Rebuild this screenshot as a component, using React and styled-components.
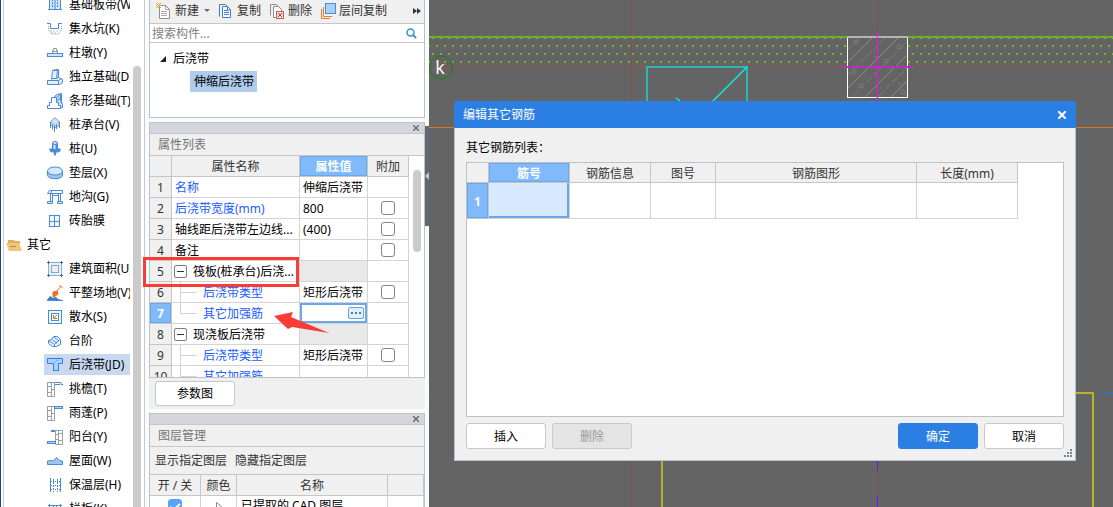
import { useState } from 'react';

import styled, { createGlobalStyle, css } from 'styled-components';


const GlobalStyle = createGlobalStyle`
    * {
        box-sizing: border-box;
    }

    body {
        margin: 0;
        font-family: "Noto Sans", "Noto Sans CJK SC", sans-serif;
        font-size: 12px;
        line-height: 20px;
        color: #000;
        overflow: hidden;
    }

    button, input {
        font: inherit;
        color: inherit;
    }

    svg {
        display: block;
        flex: none;
    }
`


const COMPONENTS = [
    { name: '基础板带(W)', icon: 'strip' },
    { name: '集水坑(K)', icon: 'pit' },
    { name: '柱墩(Y)', icon: 'pier' },
    { name: '独立基础(D)', icon: 'isolated' },
    { name: '条形基础(T)', icon: 'stripBase' },
    { name: '桩承台(V)', icon: 'cap' },
    { name: '桩(U)', icon: 'pile' },
    { name: '垫层(X)', icon: 'cushion' },
    { name: '地沟(G)', icon: 'trench' },
    { name: '砖胎膜', icon: 'brick' },
    { name: '其它', group: true },
    { name: '建筑面积(U)', icon: 'area' },
    { name: '平整场地(V)', icon: 'site' },
    { name: '散水(S)', icon: 'apron' },
    { name: '台阶', icon: 'steps' },
    { name: '后浇带(JD)', icon: 'postCast' },
    { name: '挑檐(T)', icon: 'eaves' },
    { name: '雨蓬(P)', icon: 'canopy' },
    { name: '阳台(Y)', icon: 'balcony' },
    { name: '屋面(W)', icon: 'roof' },
    { name: '保温层(H)', icon: 'insulation' },
    { name: '栏板(K)', icon: 'railing' },
];

const PROPERTIES = [
    { name: '名称', value: '伸缩后浇带', link: true },
    { name: '后浇带宽度(mm)', value: '800', link: true, extra: true },
    { name: '轴线距后浇带左边线...', value: '(400)', extra: true },
    { name: '备注', value: '', extra: true },
    { name: '筏板(桩承台)后浇...', group: true },
    { name: '后浇带类型', value: '矩形后浇带', link: true, child: true, extra: true },
    { name: '其它加强筋', value: '', link: true, child: true, last: true, active: true },
    { name: '现浇板后浇带', group: true },
    { name: '后浇带类型', value: '矩形后浇带', link: true, child: true, extra: true },
    { name: '其它加强筋', value: '', link: true, child: true, last: true },
];


function App () {
    return ( <Page>
        <GlobalStyle />
        <Sidebar />
        <MiddleColumn>
            <ComponentTree />
            <PropertyPanel />
            <LayerPanel />
        </MiddleColumn>
        <Splitter>
            <SplitterHandle aria-label="收起">
                <svg width="4" height="8"><path d="M4 0v8L0 4z" fill="#c3c8cf" /></svg>
            </SplitterHandle>
        </Splitter>
        <Workspace>
            <Drawing />
            <RebarDialog />
        </Workspace>
        <Annotation />
    </Page>
    )
}


const Page = styled.div`
    position: relative;
    display: flex;
    height: 100vh;
    overflow: hidden;
    background-color: #fafbfd;
`

const MiddleColumn = styled.div`
    flex: 0 0 276px;
    display: flex;
    flex-direction: column;
    gap: 4px;
    margin-left: 4px;
`

const Splitter = styled.div`
    flex: 0 0 4px;
    padding-top: 126px;
`

const SplitterHandle = styled.button`
    display: flex;
    align-items: center;
    width: 4px;
    height: 100px;
    padding: 0;
    border: 0;
    background-color: #5f6875;
`

const Workspace = styled.main`
    position: relative;
    flex: 1;
    min-width: 0;
    background-color: #646464;
`


export default App;


/******************************
 * COMPONENT LIST
 */

function Sidebar () {
    const [selected, setSelected] = useState('后浇带(JD)');

    return ( <SidebarWrapper>
        <SidebarList>
            {COMPONENTS.map(c => <li key={c.name}>
                <SidebarItem $group={c.group} $selected={c.name === selected} onClick={() => setSelected(c.name)}>
                    <ItemIcon name={c.group ? 'folder' : c.icon} />
                    <span>{c.name}</span>
                </SidebarItem>
            </li>)}
        </SidebarList>
        <SidebarScroll><SidebarThumb /></SidebarScroll>
    </SidebarWrapper>
    )
}


const SidebarWrapper = styled.nav`
    flex: 0 0 145px;
    display: flex;
    border-left: 1px solid #23447f;
    border-right: 1px solid #c6c8d2;
    background-color: #fff;
    overflow: hidden;
`

/* scrolled by a third of a row */
const SidebarList = styled.ul`
    flex: 1;
    min-width: 0;
    margin: -8px 0 0 2px;
    padding: 0;
    border-left: 1px solid #c9cedd;
    list-style: none;

    li {
        height: 24px;
        padding: 2px 0 1px;
    }
`

const SidebarItem = styled.button`
    display: flex;
    align-items: center;
    gap: ${p => p.$group ? 5 : 6}px;
    width: ${p => p.$group ? 124 : 86}px;
    height: 21px;
    margin-left: ${p => p.$group ? 0 : 40}px;
    padding: 0 0 0 ${p => p.$group ? 2 : 3}px;
    border: 0;
    background-color: ${p => p.$selected ? '#c7d8f0' : 'transparent'};
    white-space: nowrap;
    overflow: hidden;
`

const SidebarScroll = styled.div`
    flex: 0 0 11px;
    padding-top: 66px;
`

const SidebarThumb = styled.div`
    width: 8px;
    height: 100%;
    border-radius: 4px 4px 0 0;
    background-color: #cbcbcb;
`

const ICONS = {
    folder: <>
        <path d="M2 3h6l1 1h5v3H5L2 13z" fill="#e0b15c" />
        <path d="M0 6h13l3 8H3z" fill="#edc67c" />
        <path d="M4 9.500h6" stroke="#b98533" />
    </>,
    strip: <>
        <rect x="2.500" y="0.500" width="11" height="12" fill="#cfe4f9" />
        <path d="M5.500 2v9M10.500 2v9" strokeDasharray="2 1" />
        <path d="M1 12.500h14M8 1v11" />
    </>,
    pit: <>
        <path d="M0 2.500h3.500v5h8v-5H15" />
        <path d="M1.500 5v4l3 4h7l3-4V5" stroke="#8e99a5" strokeDasharray="1 1" />
        <path d="M3.500 10h9M5 12h6" stroke="#8e99a5" strokeDasharray="1 2" />
    </>,
    pier: <>
        <path d="M5.500 8.500v-3h1v-2h3v2h1v3M6 6.500h4" stroke="#8e99a5" />
        <rect x="0.500" y="8.500" width="15" height="3" fill="#d3e6fa" />
    </>,
    isolated: <>
        <path d="M4.500 10.500l1-9 3-1h3v8l4 2v3l-3 2h-12v-4h4" fill="#e3effc" />
        <path d="M4.500 9.500h5l1-8h-4M9.500 9.500l2-1M.500 11.500h11v4M11.500 11.500l3-2" />
    </>,
    stripBase: <>
        <path d="M5.500 6.500l4-5 5-1v10l1 1v3l-4 1z" fill="#c3ddf8" />
        <path d="M.500 15.500v-3h2v-3h2v-5h5v5h2v3h2v3z" fill="#fff" />
        <path d="M9.500 4.500l4-3v6l2 3M9.500 8l4-3" />
    </>,
    cap: <>
        <path d="M8 .500l4.500 4.500-4.500 4-4.500-4z" fill="#cfe0f1" stroke="#7c97b3" />
        <path d="M3.500 5v6M5.500 7.500v5M7.500 9v6M9.500 8v4M12.500 5v6M4 8l4 3 4-3" />
    </>,
    pile: <>
        <path d="M5.500 2v6h-3l1.500 3 2.500-.500 1.500 4 1.500-4 2.500 .500 1.500-3h-3V2z" fill="#4a8bd6" />
        <path d="M7.500 3v5" stroke="#d6e8fb" strokeWidth="2" />
        <ellipse cx="8" cy="2" rx="2.500" ry="1.500" fill="#cfe4f9" />
    </>,
    cushion: <>
        <path d="M.500 6v4c0 5 15 5 15 0V6" fill="#9dc3ee" />
        <ellipse cx="8" cy="6" rx="7.500" ry="4" fill="#d6e8fb" />
    </>,
    trench: <>
        <path d="M.500 4.500l2-3h13v3zM3.500 4.500v8M5.500 4.500v8M11.500 4.500v8M13.500 4.500v8" />
        <path d="M.500 12.500h5v2h-5zM10.500 12.500h5v2h-5z" fill="#d3e6fa" />
        <path d="M6 6.500h5M5 1l-1 3" />
    </>,
    brick: <>
        <rect x="2.500" y="2.500" width="10" height="11" fill="#f4f9ff" />
        <path d="M7.500 2v12M2 8.500h11" />
        <path d="M5.500 7v3M10.500 7v3" stroke="#a7cdf3" />
    </>,
    area: <>
        <rect x="1.500" y="1.500" width="13" height="13" fill="#e6f1fd" stroke="#7db1ea" />
        <rect x="4.500" y="4.500" width="7" height="7" fill="#eee" stroke="#9aa3ad" />
        <path d="M0 1.500h3M13 1.500h3M0 14.500h3M13 14.500h3M1.500 0v3M14.500 0v3M1.500 13v3M14.500 13v3" stroke="#44699a" />
    </>,
    site: <>
        <path d="M10 6l4-5M12.500 .500l3 2" stroke="#e8702a" />
        <path d="M6 7l4-1 1 3-4 3H6z" fill="#e8702a" stroke="#e8702a" />
        <path d="M0 15l3-4 3 2 3-1 2 2 4 1z" fill="#3c7cc6" stroke="none" />
        <path d="M0 15.500h16" />
    </>,
    apron: <>
        <rect x="1.500" y="1.500" width="13" height="13" fill="#f1f7fe" />
        <rect x="4.500" y="4.500" width="7" height="7" fill="#fff" />
        <path d="M10 6l-3 3M6.500 6v3.500H10" stroke="#e8702a" />
    </>,
    steps: <>
        <path d="M1.500 7.500l3-1 2-3h4l3 3v5l-4 2h-4l-4-3z" fill="#e7f2fe" />
        <path d="M1.500 7.500l6 4v2M5 6.500l5 4M7 4l5 4M7.500 11l5-4" />
    </>,
    postCast: <>
        <path d="M.500 1.500h15v5h-4v7h-5v-7h-6z" fill="#a9d0fa" stroke="#2f83dc" />
        <path d="M6.500 6.500l3-3h2" stroke="#74b1f2" />
    </>,
    eaves: <>
        <path d="M.500 1.500h7v14h-7zM4.500 1.500v14M.500 5.500h4M4.500 8.500h3M.500 11.500h4" stroke="#9b9ea3" />
        <path d="M8 1.500h6v2h2M8 3.500h5" />
    </>,
    canopy: <>
        <path d="M.500 1.500h7v14h-7zM4.500 1.500v14M.500 5.500h4M4.500 8.500h3M.500 11.500h4" stroke="#9b9ea3" />
        <rect x="7.500" y="1.500" width="8" height="2" fill="#a9d0fa" />
    </>,
    balcony: <>
        <path d="M8.500 1.500h7v14h-7zM11.500 1.500v14M8.500 5.500h3M11.500 4.500h4M8.500 10.500h3M11.500 11.500h4" stroke="#9b9ea3" />
        <path d="M4 2h4" strokeWidth="2" />
        <rect x="0.500" y="12.500" width="8" height="2" fill="#a9d0fa" />
    </>,
    roof: <path d="M.500 11.500V8l4-.500 2 .500 3-3.500 3 3 3 .500v3.500z" fill="#9dc3ee" />,
    insulation: <>
        <path d="M3.500 1v14M13.500 1v14" />
        <path d="M6.500 2v13M10.500 2v13" strokeDasharray="2 1" />
        <path d="M4 4.500h9M4 8.500h9M4 12.500h9" strokeDasharray="1 1" />
    </>,
    railing: <path d="M1 4.500h14M2.500 3v12M6.500 5v3l3 3M13.500 3v12M9.500 5v6M2 8.500h12" />,
};

function ItemIcon ({ name }) {
    const plain = name === 'folder';

    return ( <svg width="16" height="16" fill="none" stroke={plain ? 'none' : '#4a8bd6'}>
        {ICONS[name]}
    </svg>
    )
}


/******************************
 * TREE OF COMPONENTS
 */

function ComponentTree () {
    return ( <TreePanel>
        <Toolbar>
            <ToolButton>
                <svg width="16" height="16" fill="none">
                    <path d="M3.500 2.500h6l4 4v9h-10z" fill="#fff" stroke="#8d8f93" />
                    <path d="M9.500 2.500v4h4M5 8.500h6M5 10.500h6M5 12.500h6" stroke="#a5a7aa" />
                    <path d="M0 .500h5M0 2.500h5M0 4.500h5" stroke="#f0a43a" strokeDasharray="1 1" />
                    <path d="M1 1.500h4M1 3.500h4" stroke="#f0a43a" strokeDasharray="1 1" />
                </svg>
                新建
                <svg width="8" height="4"><path d="M2 0h6L5 3z" fill="#6c6c6c" /></svg>
            </ToolButton>
            <ToolButton>
                <svg width="16" height="16" fill="none" stroke="#3f7fd0">
                    <path d="M1.500 13.500v-12h6l2 2" />
                    <path d="M4.500 3.500h5l3 3v8h-8z" fill="#fff" />
                    <path d="M6 7.500h4M6 9.500h5M6 11.500h5M9.500 4v3h3" />
                </svg>
                复制
            </ToolButton>
            <ToolButton>
                <svg width="16" height="16" fill="none" stroke="#8d8f93">
                    <path d="M1.500 12.500v-11h6l2 2" />
                    <path d="M4.500 3.500h5l3 3v8h-8z" fill="#fff" />
                    <rect x="7.500" y="8.500" width="7" height="7" fill="#fbe0e0" stroke="#d65656" />
                    <path d="M9 10l4 4M13 10l-4 4" stroke="#d03434" />
                </svg>
                删除
            </ToolButton>
            <ToolButton>
                <svg width="16" height="16" fill="none" stroke="#e8772d">
                    <path d="M1.500 6v9.500H10M3.500 4v9.500H12" />
                    <rect x="5.500" y="0.500" width="10" height="10" fill="#a9d0fa" stroke="#4a8bd6" />
                </svg>
                层间复制
            </ToolButton>
            <MoreButton aria-label="更多">
                <svg width="8" height="6" fill="#333"><path d="M0 0l4 3-4 3zM4 0l4 3-4 3z" /></svg>
            </MoreButton>
        </Toolbar>
        <SearchRow>
            <SearchInput aria-label="搜索构件" placeholder="搜索构件..." />
            <svg width="11" height="11" fill="none" stroke="#3b92c8">
                <circle cx="4.500" cy="4.500" r="3.500" strokeWidth="1.500" />
                <path d="M7 7l3 3" strokeWidth="2" />
            </svg>
        </SearchRow>
        <TreeBody>
            <TreeRow>
                <svg width="6" height="6"><path d="M6 0v6H0z" fill="#222" /></svg>
                后浇带
            </TreeRow>
            <TreeLeaf>伸缩后浇带</TreeLeaf>
        </TreeBody>
    </TreePanel>
    )
}


const TreePanel = styled.section`
    border: 1px solid #bcbfc4;
    border-top: 0;
    background-color: #fff;
`

const Toolbar = styled.div`
    display: flex;
    align-items: center;
    gap: 8px;
    height: 24px;
    padding: 0 3px 2px 6px;
    border-bottom: 1px solid #c4c6ca;
    background-color: #f0f0f0;
`

const ToolButton = styled.button`
    display: flex;
    align-items: center;
    gap: 3px;
    padding: 0;
    border: 0;
    background: none;
    color: #333;
`

const MoreButton = styled(ToolButton)`
    margin-left: auto;
`

const SearchRow = styled.div`
    display: flex;
    align-items: center;
    height: 19px;
    padding-right: 7px;
    border-bottom: 1px solid #c4c6ca;
`

const SearchInput = styled.input`
    flex: 1;
    min-width: 0;
    height: 18px;
    padding: 2px 2px 0;
    border: 0;
    outline: 0;
    background: none;

    &::placeholder {
        color: #808080;
        opacity: 1;
    }
`

const TreeBody = styled.div`
    height: 74px;
    padding: 4px 0 0 10px;
`

const TreeRow = styled.div`
    display: flex;
    align-items: center;
    gap: 7px;
    height: 24px;
`

const TreeLeaf = styled.div`
    width: max-content;
    height: 21px;
    margin-left: 30px;
    padding: 1px 3px 0 4px;
    background-color: #b1cbec;
`


/******************************
 * DOCK PANELS
 */

function DockHeader ({ title }) {
    return ( <>
        <DockStrip>
            <DockClose aria-label="关闭">
                <svg width="6" height="6" stroke="#6a6d72" strokeWidth="1.500"><path d="M0 0l6 6M6 0L0 6" /></svg>
            </DockClose>
        </DockStrip>
        <DockTitle>{title}</DockTitle>
    </>
    )
}


const DockPanel = styled.section`
    border: 1px solid #c0c2c8;
    background-color: #f0f0f0;
`

const DockStrip = styled.div`
    display: flex;
    align-items: center;
    justify-content: flex-end;
    height: 11px;
    padding-right: 5px;
    border-bottom: 1px solid #c4c6cc;
    background-color: #d4d6dc;
`

const DockClose = styled.button`
    padding: 0;
    border: 0;
    background: none;
`

const DockTitle = styled.h2`
    height: 22px;
    margin: 0;
    padding: 1px 8px 0;
    border-bottom: 1px solid #c4c6ca;
    font-size: 12px;
    font-weight: normal;
    color: #757575;
`

const Grid = styled.table`
    table-layout: fixed;
    width: 100%;
    border-spacing: 0;
    background-color: #fff;
`

const HeadCell = styled.th`
    height: 21px;
    padding: 2px 0 0;
    border-right: 1px solid #c6c6c6;
    border-bottom: 1px solid #c6c6c6;
    background-color: ${p => p.$active ? '#80bafb' : '#f0f0f0'};
    font-weight: ${p => p.$active ? 'bold' : 'normal'};
    line-height: 18px;
    text-align: center;
    color: ${p => p.$active ? '#fff' : '#333'};
    ${p => p.$active && 'box-shadow: inset 0 0 0 1px #6aa8ec;'}
`

const Cell = styled.td`
    height: ${p => p.$tall ? 36 : 21}px;
    padding: 0;
    border-right: 1px solid #d4d4d4;
    border-bottom: 1px solid #d4d4d4;
    background-color: ${p => p.$shaded ? '#e9e9e9' : '#fff'};
`

const CheckBox = styled.input.attrs({ type: 'checkbox' })`
    appearance: none;
    display: grid;
    place-items: center;
    width: 14px;
    height: 14px;
    margin: 0 auto;
    border: 1px solid #858585;
    border-radius: 3px;
    background-color: #fff;

    &:checked {
        border-color: #5ba3f5;
        background-color: #5ba3f5;
    }

    &:checked::after {
        content: "";
        width: 4px;
        height: 8px;
        border: solid #fff;
        border-width: 0 2px 2px 0;
        transform: rotate(45deg);
    }
`


/******************************
 * PROPERTY LIST
 */

function PropertyPanel () {
    return ( <PropertyWrapper>
        <DockPanel>
            <DockHeader title="属性列表" />
            <PropertyScroll>
                <Grid>
                    <colgroup>
                        <col width="22" /><col width="128" /><col width="68" /><col width="41" />
                    </colgroup>
                    <thead>
                        <tr>
                            <HeadCell />
                            <HeadCell>属性名称</HeadCell>
                            <HeadCell $active>属性值</HeadCell>
                            <HeadCell>附加</HeadCell>
                        </tr>
                    </thead>
                    <tbody>
                        {PROPERTIES.map((p, i) => <PropertyRow key={i} number={i + 1} {...p} />)}
                    </tbody>
                </Grid>
                <PropertyTrack><PropertyThumb /></PropertyTrack>
            </PropertyScroll>
        </DockPanel>
        <PropertyFooter>
            <PlainButton>参数图</PlainButton>
        </PropertyFooter>
    </PropertyWrapper>
    )
}


function PropertyRow ({ number, name, value, link, group, child, last, active, extra }) {
    return ( <tr>
        <HeadCell scope="row" $active={active}>{number}</HeadCell>
        <Cell>
            <NameLine $group={group}>
                {group && <Expander aria-label="折叠"><svg width="7" height="1"><path d="M0 .500h7" stroke="#333" /></svg></Expander>}
                {child && <Guide width="23" height="20" fill="none" stroke="#d2d2d2">
                    <path d={last ? 'M.500 0v10.500h16' : 'M.500 0v20M.500 10.500h16'} />
                </Guide>}
                <PropertyName $link={link}>{name}</PropertyName>
            </NameLine>
        </Cell>
        <Cell $shaded={group}>
            <ValueLine $active={active}>
                {value}
                {active && <EllipsisButton aria-label="编辑其它钢筋">
                    <svg width="10" height="2" fill="#3b7fc4"><path d="M0 0h2v2H0zM4 0h2v2H4zM8 0h2v2H8z" /></svg>
                </EllipsisButton>}
            </ValueLine>
        </Cell>
        <Cell>{extra && <CheckBox aria-label={name + ' 附加'} />}</Cell>
    </tr>
    )
}


const PropertyWrapper = styled.div`
    background-color: #f0f0f0;
`

const PropertyScroll = styled.div`
    display: flex;
    height: 221px;
    background-color: #fff;
    overflow: hidden;

    ${Grid} {
        width: 259px;
        height: max-content;
    }
`

const PropertyTrack = styled.div`
    padding: 14px 0 0 4px;
`

const PropertyThumb = styled.div`
    width: 8px;
    height: 82px;
    border-radius: 4px;
    background-color: #cbcbcb;
`

const NameLine = styled.div`
    display: flex;
    align-items: center;
    height: 20px;
    padding-left: ${p => p.$group ? 2 : 3}px;
`

const PropertyName = styled.span`
    padding-top: 2px;
    color: ${p => p.$link ? '#1a5cff' : '#000'};
    white-space: nowrap;
`

const Expander = styled.button`
    flex: none;
    display: grid;
    place-items: center;
    width: 13px;
    height: 13px;
    margin-right: 6px;
    padding: 0;
    border: 1px solid #7d7d7d;
    border-radius: 2px;
    background-color: #fff;
`

const Guide = styled.svg`
    margin-left: 5px;
`

const ValueLine = styled.div`
    display: flex;
    align-items: center;
    height: 20px;
    padding: ${p => p.$active ? 0 : 2}px 3px 0;
    white-space: nowrap;
    ${p => p.$active && 'box-shadow: inset 0 0 0 2px #6aa8ec;'}
`

const EllipsisButton = styled.button`
    display: grid;
    place-items: center;
    width: 16px;
    height: 12px;
    margin-left: auto;
    padding: 0;
    border: 1px solid #6a9fd4;
    border-radius: 2px;
    background-color: #e3effb;
`

const PropertyFooter = styled.div`
    padding: 3px 6px;
`

const PlainButton = styled.button`
    min-width: 80px;
    height: 25px;
    padding: 0 12px;
    border: 1px solid #c8c8c8;
    border-radius: 3px;
    background-color: #fff;
`


/******************************
 * LAYER MANAGER
 */

function LayerPanel () {
    return ( <DockPanel>
        <DockHeader title="图层管理" />
        <LayerTools>
            <ToolButton>显示指定图层</ToolButton>
            <ToolButton>隐藏指定图层</ToolButton>
        </LayerTools>
        <Grid>
            <colgroup>
                <col width="51" /><col width="36" /><col width="151" /><col />
            </colgroup>
            <thead>
                <tr>
                    <HeadCell>开 / 关</HeadCell>
                    <HeadCell>颜色</HeadCell>
                    <HeadCell>名称</HeadCell>
                    <HeadCell />
                </tr>
            </thead>
            <tbody>
                <tr>
                    <Cell><CheckBox defaultChecked aria-label="已提取的 CAD 图层" /></Cell>
                    <Cell>
                        <LayerArrow width="6" height="9" fill="none" stroke="#8a8a8a"><path d="M.500 .500l5 4-5 4z" /></LayerArrow>
                    </Cell>
                    <Cell><LayerName>已提取的 CAD 图层</LayerName></Cell>
                    <Cell />
                </tr>
            </tbody>
        </Grid>
    </DockPanel>
    )
}


const LayerTools = styled.div`
    display: flex;
    align-items: center;
    gap: 8px;
    height: 28px;
    padding: 0 5px;
    border-bottom: 1px solid #c4c6ca;
`

const LayerArrow = styled.svg`
    margin: 0 auto;
`

const LayerName = styled.div`
    padding-left: 4px;
`


/******************************
 * CAD DRAWING
 */

function Drawing () {
    return ( <DrawingSvg fill="none">
        <defs>
            <pattern id="dots" x="3" y="37" width="8" height="16" patternUnits="userSpaceOnUse">
                <path d="M0 0h2v2H0zM4 8h2v2H4z" fill="#76b526" />
            </pattern>
            <pattern id="hatch" x="418" y="37" width="26" height="26" patternUnits="userSpaceOnUse">
                <path d="M-1 27L27-1M-1 1L1-1M25 27l2-2" stroke="#8a8a8a" />
                <path d="M-1 14L14-1M12 27l15-15" stroke="#7c7c7c" strokeDasharray="8 2" />
            </pattern>
        </defs>
        <g shapeRendering="crispEdges">
            <rect y="66" width="100%" height="1" fill="#8a5252" />
            <path d="M202.500 0v507M448.500 0v507" stroke="#8e4c4c" />
            <rect y="37" width="100%" height="26" fill="url(#dots)" />
            <rect y="36" width="100%" height="2" fill="#6fae2b" />
            <rect y="127" width="100%" height="1" fill="#d87a20" />
            <path d="M218 110V67h100v43" stroke="#2fb5b5" strokeWidth="2" />
            <rect x="418" y="37" width="61" height="60" fill="#646464" />
            <path d="M233 430v170M630 393h34v150" stroke="#b3b32c" strokeWidth="2" />
            <path d="M0 392.500h2M673 392.500h40" stroke="#1e74e0" />
            <path d="M448.500 461v10M448.500 496v30" stroke="#7b10e8" />
        </g>
        <path d="M318 67l-44 44M247 98l4 3" stroke="#10e8e8" strokeWidth="1.500" />
        <rect x="418.500" y="37.500" width="60" height="60" fill="url(#hatch)" stroke="#fff" />
        <path d="M418 37h61" stroke="#b4b4b4" strokeWidth="2" />
        <g stroke="#7e7e7e">
            <circle cx="427" cy="42" r="2" /><circle cx="457" cy="61" r="2" /><circle cx="470" cy="47" r="2" />
            <circle cx="432" cy="86" r="2" /><circle cx="425" cy="72" r="2" /><circle cx="474" cy="92" r="2" />
            <path d="M438 43h2M464 80l2 1M451 88h2M446 56l2 1M461 69h1M436 78h1M470 84h2M430 93h1" />
        </g>
        <path d="M412 67h73" stroke="#b82fb8" strokeWidth="2" />
        <path d="M448.500 31v80" stroke="#f010f0" />
        <path d="M12 55.500l6 2 4 4 1.500 5.500-1.500 6-4 4-6 2-6-2-4-4L.500 67l1.500-5.500 4-4z" stroke="#128012" />
        <AxisText x="11" y="74">k</AxisText>
    </DrawingSvg>
    )
}


const DrawingSvg = styled.svg`
    width: 100%;
    height: 100%;
`

const AxisText = styled.text`
    fill: #fff;
    font-family: "Open Sans", sans-serif;
    font-size: 18px;
    text-anchor: middle;
`


/******************************
 * REBAR DIALOG
 */

function RebarDialog () {
    return ( <DialogWrapper role="dialog" aria-labelledby="rebar-title">
        <DialogHeader>
            <span id="rebar-title">编辑其它钢筋</span>
            <DialogClose aria-label="关闭">
                <svg width="8" height="8" stroke="#fff" strokeWidth="2"><path d="M0 0l8 8M8 0L0 8" /></svg>
            </DialogClose>
        </DialogHeader>
        <DialogBody>
            <div>其它钢筋列表：</div>
            <RebarBox>
                <RebarGrid>
                    <colgroup>
                        <col width="22" /><col width="81" /><col width="81" /><col width="65" /><col width="201" /><col width="101" />
                    </colgroup>
                    <thead>
                        <tr>
                            <HeadCell />
                            <HeadCell $active>筋号</HeadCell>
                            <HeadCell>钢筋信息</HeadCell>
                            <HeadCell>图号</HeadCell>
                            <HeadCell>钢筋图形</HeadCell>
                            <HeadCell>长度(mm)</HeadCell>
                        </tr>
                    </thead>
                    <tbody>
                        <tr>
                            <HeadCell scope="row" $active>1</HeadCell>
                            <FocusCell $tall />
                            <Cell $tall />
                            <Cell $tall />
                            <Cell $tall />
                            <Cell $tall />
                        </tr>
                    </tbody>
                </RebarGrid>
            </RebarBox>
            <DialogButtons>
                <DialogButton>插入</DialogButton>
                <DialogButton disabled>删除</DialogButton>
                <Spacer />
                <DialogButton $primary>确定</DialogButton>
                <DialogButton>取消</DialogButton>
            </DialogButtons>
        </DialogBody>
        <Grip width="8" height="8" fill="#7d838b">
            <path d="M6 0h2v2H6zM3 3h2v2H3zM6 3h2v2H6zM0 6h2v2H0zM3 6h2v2H3zM6 6h2v2H6z" />
        </Grip>
    </DialogWrapper>
    )
}


const DialogWrapper = styled.div`
    position: absolute;
    top: 101px;
    left: 25px;
    right: 37px;
    border: 1px solid #b4c2d4;
    border-top: 0;
    background-color: #f0f0f0;
`

const DialogHeader = styled.div`
    display: flex;
    align-items: center;
    justify-content: space-between;
    height: 27px;
    margin: 0 -1px;
    padding: 0 10px 0 9px;
    background-color: #2c7fe2;
    color: #fff;
`

const DialogClose = styled.button`
    padding: 0;
    border: 0;
    background: none;
`

const DialogBody = styled.div`
    display: flex;
    flex-direction: column;
    padding: 10px 11px 11px;
`

const RebarBox = styled.div`
    height: 255px;
    margin: 4px 0 6px;
    border: 1px solid #bfc1c5;
    background-color: #fff;
    overflow: hidden;
`

const RebarGrid = styled(Grid)`
    width: 551px;

    th {
        height: 20px;
        padding-top: 3px;
        line-height: 16px;
    }
`

const FocusCell = styled(Cell)`
    background-color: #d7eaff;
    box-shadow: inset -1px -1px 0 1px #6aa8ec;
`

const DialogButtons = styled.div`
    display: flex;
    gap: 6px;
`

const DialogButton = styled(PlainButton)`
    height: 26px;
    padding-top: 2px;
    ${p => p.$primary && css`
        border-color: #2c7fe2;
        background-color: #2c7fe2;
        color: #fff;
    `}

    &:disabled {
        background-color: #e4e4e4;
        color: #9a9a9a;
    }
`

const Spacer = styled.div`
    flex: 1;
`

const Grip = styled.svg`
    position: absolute;
    right: 3px;
    bottom: 3px;
`


/******************************
 * RED MARKS OVER THE PROPERTY LIST
 */

function Annotation () {
    return ( <AnnotationSvg width="200" height="80" fill="none">
        <rect x="2.500" y="2.500" width="153" height="27" stroke="#fa3c37" strokeWidth="3" />
        <path d="M132 60l19-4-2 5 38 16-37-6-4 2z" fill="#fa3c37" />
    </AnnotationSvg>
    )
}


const AnnotationSvg = styled.svg`
    position: absolute;
    top: 256px;
    left: 142px;
    pointer-events: none;
`
